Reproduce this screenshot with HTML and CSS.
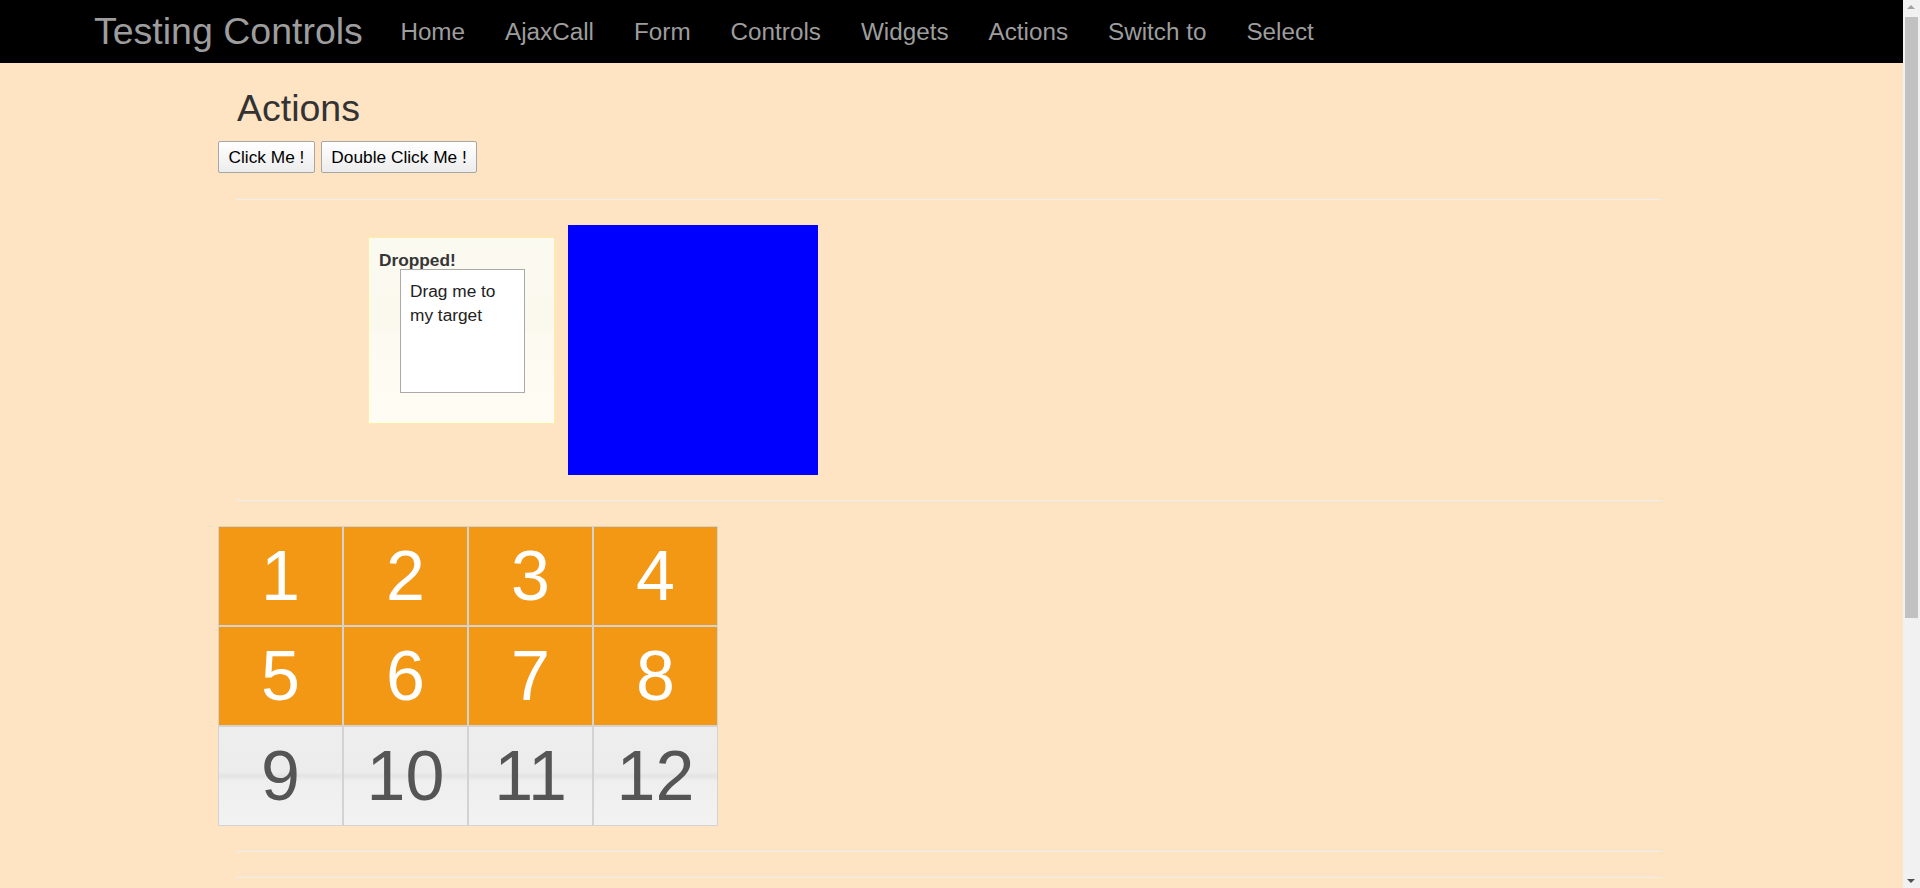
FILE: index.html
```html
<!DOCTYPE html>
<html lang="en">
<head>
<meta charset="utf-8">
<title>Actions - Testing Controls</title>
<link rel="stylesheet" href="styles.css">
</head>
<body>
<nav class="navbar">
  <div class="nav-inner">
    <a class="brand" href="#">Testing Controls</a>
    <ul class="nav-links">
      <li><a href="#">Home</a></li>
      <li><a href="#">AjaxCall</a></li>
      <li><a href="#">Form</a></li>
      <li><a href="#">Controls</a></li>
      <li><a href="#">Widgets</a></li>
      <li><a href="#">Actions</a></li>
      <li><a href="#">Switch to</a></li>
      <li><a href="#">Select</a></li>
    </ul>
  </div>
</nav>
<main class="page">
  <h1 class="title">Actions</h1>
  <div class="btn-row">
    <button class="btn" type="button">Click Me !</button>
    <button class="btn" type="button">Double Click Me !</button>
  </div>
  <hr class="rule rule-first">
  <div class="drag-row">
    <div class="droppable">
      <p class="drop-label">Dropped!</p>
      <div class="draggable">Drag me to my target</div>
    </div>
    <div class="blue-box"></div>
  </div>
  <hr class="rule rule-mid">
  <ol class="selectable">
    <li class="cell selected">1</li>
    <li class="cell selected">2</li>
    <li class="cell selected">3</li>
    <li class="cell selected">4</li>
    <li class="cell selected">5</li>
    <li class="cell selected">6</li>
    <li class="cell selected">7</li>
    <li class="cell selected">8</li>
    <li class="cell">9</li>
    <li class="cell">10</li>
    <li class="cell">11</li>
    <li class="cell">12</li>
  </ol>
  <hr class="rule rule-after-grid">
  <hr class="rule rule-last">
  <div class="spacer"></div>
</main>
<div class="scrollbar" aria-hidden="true">
  <span class="scroll-arrow scroll-up"></span>
  <span class="scroll-thumb"></span>
  <span class="scroll-arrow scroll-down"></span>
</div>
</body>
</html>
```

FILE: styles.css
```css
html {
  background: #ffe4c4;
}

body {
  margin: 0;
  background: #ffe4c4;
  font-family: "Liberation Sans", Arial, Helvetica, sans-serif;
  font-size: 17.3px;
  line-height: 24.3px;
  color: #333;
}

/* Navbar */
.navbar {
  background: #000;
  height: 63px;
}

.nav-inner {
  display: flex;
  align-items: center;
  height: 100%;
  padding-left: 94px;
}

.brand {
  font-size: 37.5px;
  line-height: 41px;
  color: #9d9d9d;
  text-decoration: none;
  padding-right: 17.5px;
}

.nav-links {
  display: flex;
  list-style: none;
  margin: 0;
  padding: 0;
}

.nav-links a {
  display: block;
  padding: 0 20px;
  font-size: 24.25px;
  line-height: 28px;
  color: #9d9d9d;
  text-decoration: none;
}

/* Page */
.page {
  margin-left: 218px;
  width: 1462px;
}

.title {
  font-size: 37.5px;
  font-weight: normal;
  line-height: 40px;
  margin: 25px 0 13px 19px;
  color: #333;
}

.btn-row {
  display: flex;
  gap: 6px;
}

.btn {
  height: 32px;
  padding: 0 9.5px;
  font-family: "Liberation Sans", Arial, sans-serif;
  font-size: 17.3px;
  color: #000;
  border: 1px solid #a6a6a6;
  border-radius: 2px;
  background: linear-gradient(to bottom, #ffffff 0%, #f6f6f6 50%, #ececec 100%);
}

.rule {
  height: 0;
  border: 0;
  border-top: 1px solid #eee;
  margin: 0 18px;
}

.rule-first {
  margin-top: 26px;
}

.rule-mid {
  margin-top: 25px;
}

.rule-after-grid {
  margin-top: 25px;
}

.rule-last {
  margin-top: 25px;
}

/* Drag and drop */
.drag-row {
  display: flex;
  align-items: flex-start;
  margin-top: 25px;
  padding-left: 150px;
}

.droppable {
  position: relative;
  width: 165px;
  height: 165px;
  padding: 10px;
  border: 1px solid #fcefa1;
  margin-top: 12px;
  background: linear-gradient(to bottom, #fbfaf0 0%, #fbf9ee 50%, #fdfaf1 52%, #fffcf4 100%);
  color: #363636;
}

.drop-label {
  margin: 0;
  font-weight: bold;
}

.draggable {
  position: absolute;
  left: 31px;
  top: 31px;
  box-sizing: border-box;
  width: 125px;
  height: 124px;
  padding: 8.5px 9px;
  border: 1px solid #aaa;
  background: #fff;
  color: #222;
}

.blue-box {
  width: 250px;
  height: 250px;
  margin-left: 13px;
  background: #0000ff;
}

/* Selectable grid */
.selectable {
  display: grid;
  grid-template-columns: repeat(4, 125px);
  grid-auto-rows: 100px;
  list-style: none;
  margin: 25px 0 0;
  padding: 0;
  width: max-content;
}

.cell {
  box-sizing: border-box;
  border: 1px solid #d3d3d3;
  font-size: 70px;
  line-height: 98px;
  text-align: center;
  color: #555;
  background: linear-gradient(to bottom, #eeeeee 0%, #ececec 46%, #e3e3e3 50%, #efefef 55%, #f2f2f2 100%);
}

.cell.selected {
  background: #f39814;
  color: #fff;
}

.spacer {
  height: 381px;
}

/* Window scrollbar as seen in the reference capture */
.scrollbar {
  position: fixed;
  top: 0;
  right: 0;
  bottom: 0;
  width: 17px;
  background: #f1f1f1;
}

.scroll-thumb {
  position: absolute;
  top: 17px;
  left: 2px;
  right: 2px;
  height: 601px;
  background: #c1c1c1;
}

.scroll-arrow {
  position: absolute;
  left: 4px;
  width: 0;
  height: 0;
  border-left: 4.5px solid transparent;
  border-right: 4.5px solid transparent;
}

.scroll-up {
  top: 5px;
  border-bottom: 4.5px solid #a3a3a3;
}

.scroll-down {
  bottom: 5px;
  border-top: 4.5px solid #505050;
}
```
